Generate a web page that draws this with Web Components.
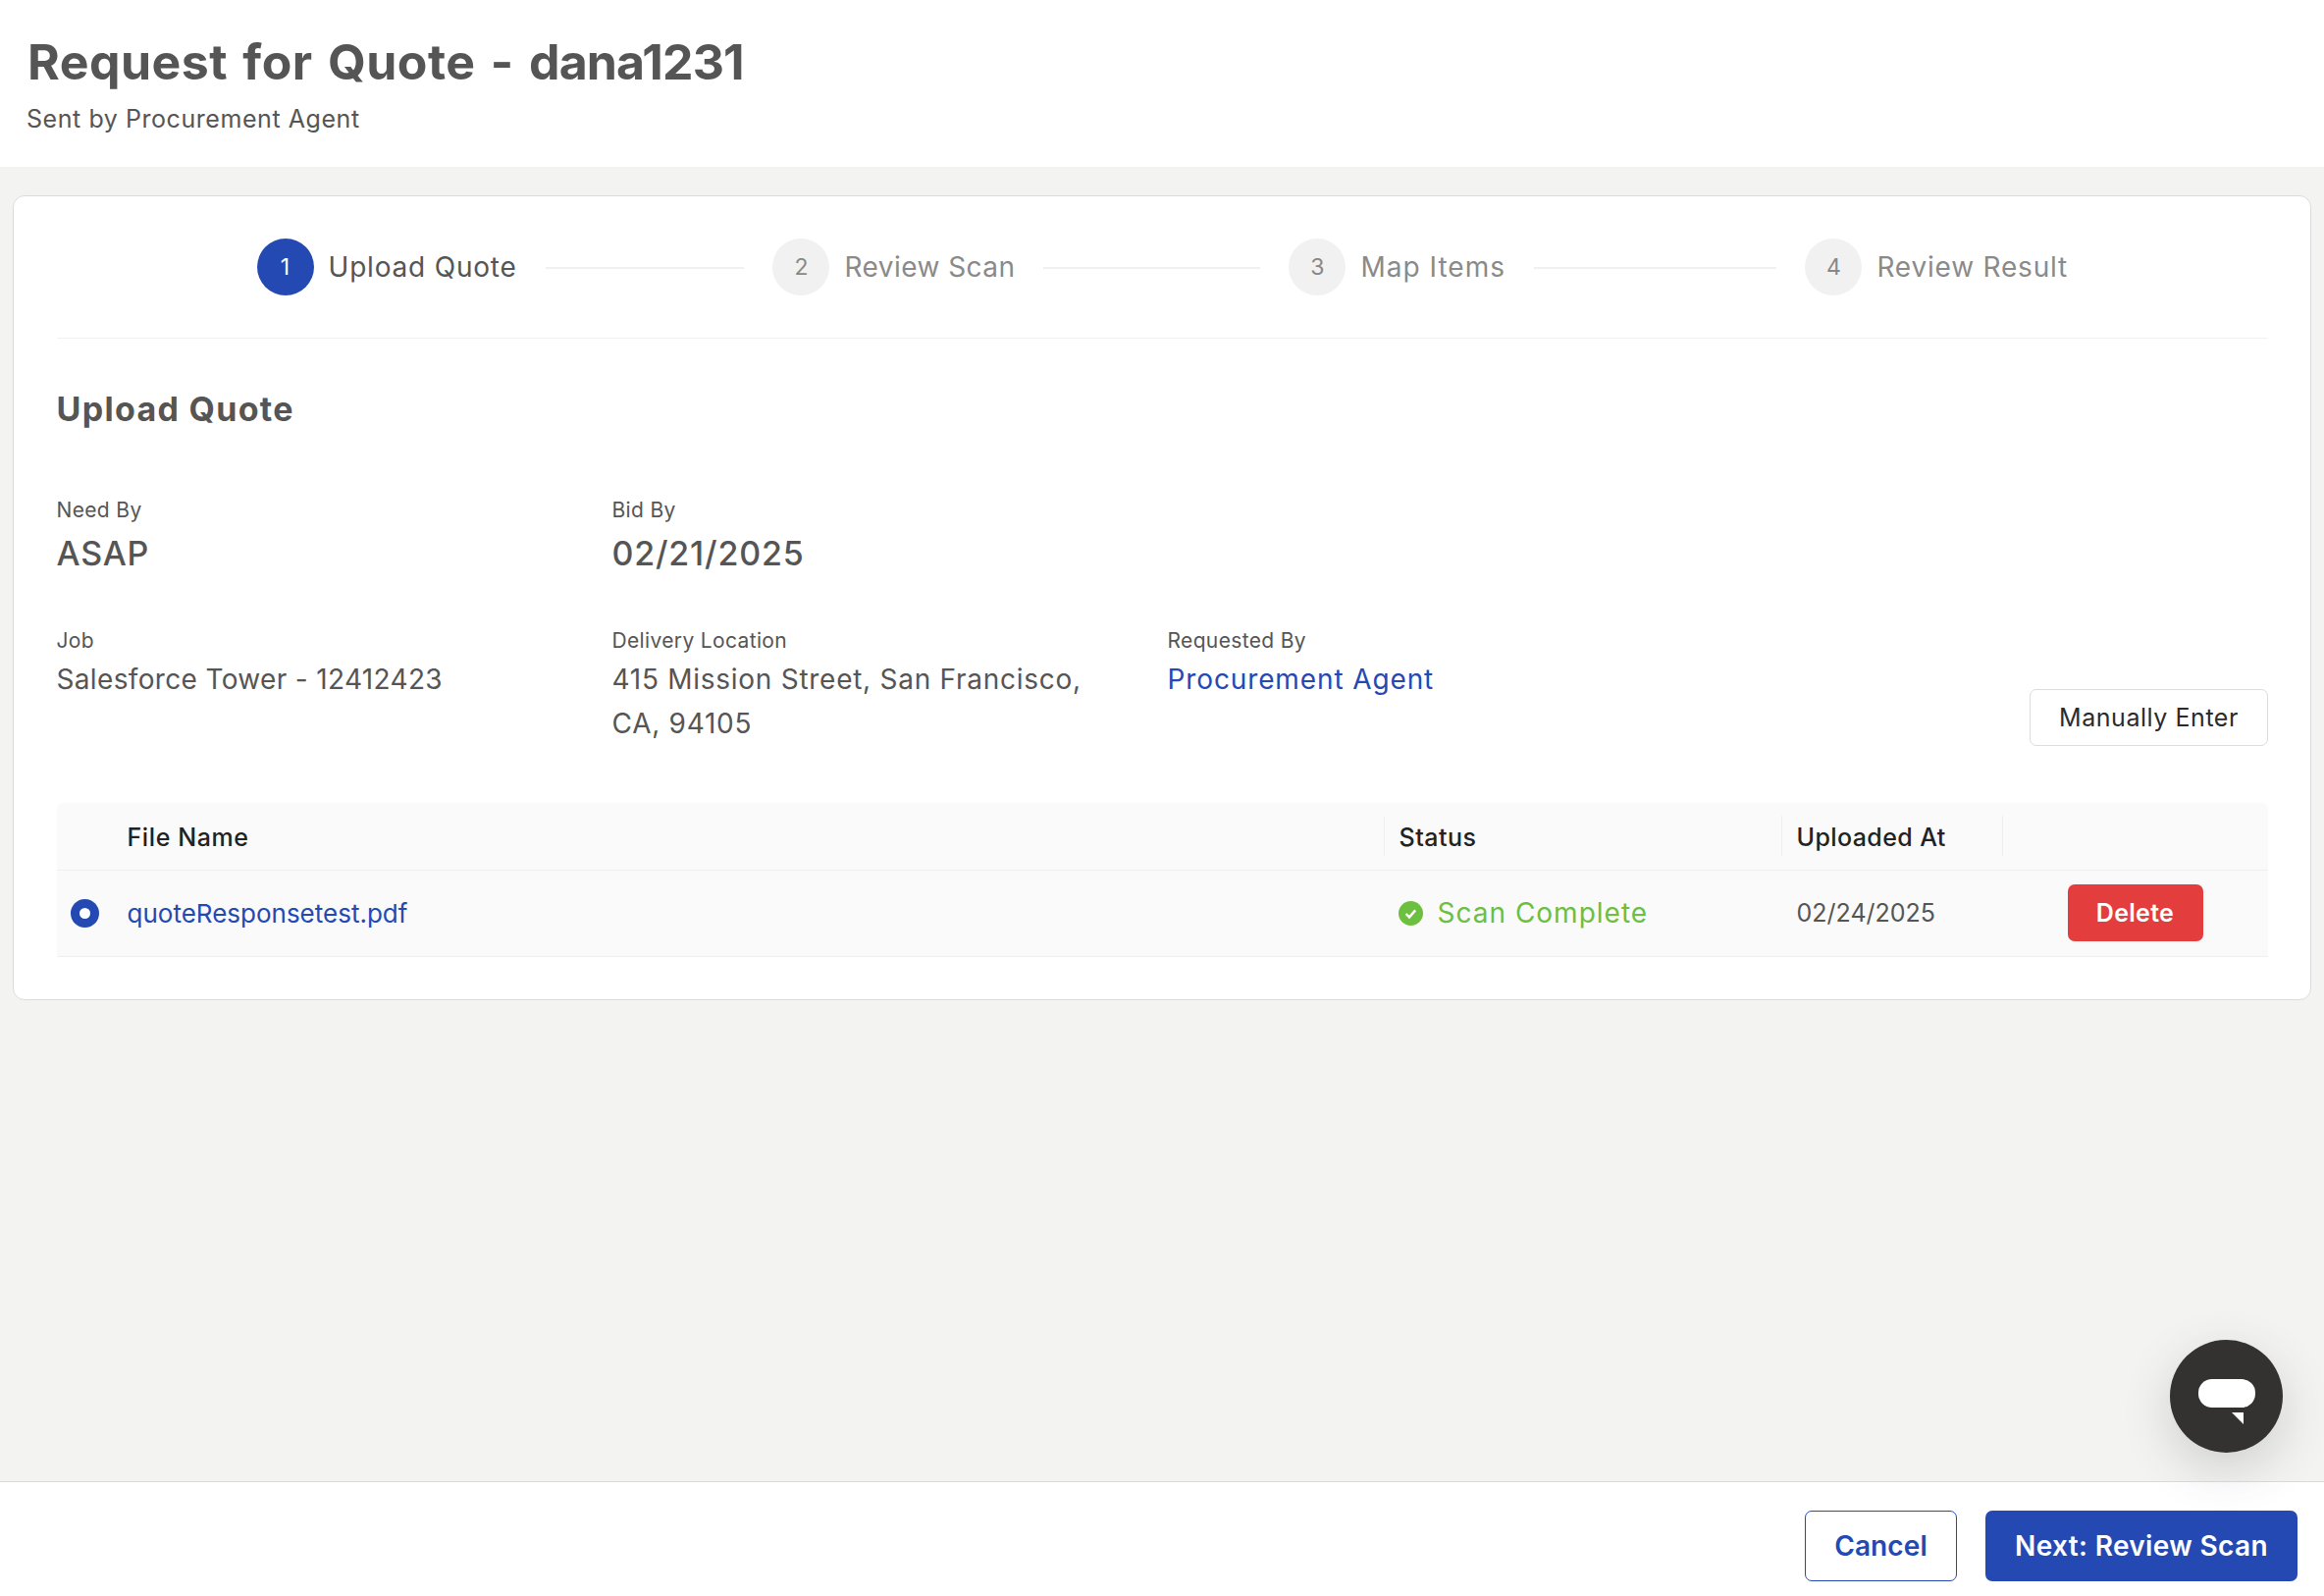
<!DOCTYPE html>
<html>
<head>
<meta charset="utf-8">
<title>Request for Quote</title>
<style>
  html, body { margin: 0; height: 100%; }
  body { font-family: Inter, "Liberation Sans", sans-serif; color: #555; background: #f3f3f2; }
</style>
</head>
<body>
<rfq-page>
  <rfq-header slot="header" title-text="Request for Quote - " name="dana1231" sub="Sent by Procurement Agent"></rfq-header>
  <rfq-card>
    <rfq-stepper>
      <rfq-step num="1" active ls="0.8">Upload Quote</rfq-step>
      <rfq-step num="2" ls="0.45">Review Scan</rfq-step>
      <rfq-step num="3" ls="1">Map Items</rfq-step>
      <rfq-step num="4" ls="0.8" last>Review Result</rfq-step>
    </rfq-stepper>
    <rfq-info>
      <rfq-field label="Need By" big ls="0.7">ASAP</rfq-field>
      <rfq-field label="Bid By" big ls="0.8">02/21/2025</rfq-field>
      <span></span><span></span>
      <rfq-field label="Job" ls="0.34">Salesforce Tower - 12412423</rfq-field>
      <rfq-field label="Delivery Location" ls="0.73">415 Mission Street, San Francisco, CA, 94105</rfq-field>
      <rfq-field label="Requested By" link ls="0.88">Procurement Agent</rfq-field>
      <rfq-button slot="action" kind="plain" ls="0.55">Manually Enter</rfq-button>
    </rfq-info>
    <rfq-table></rfq-table>
  </rfq-card>
  <rfq-footer slot="footer">
    <rfq-button kind="outline" ls="0.1">Cancel</rfq-button>
    <rfq-button kind="primary" ls="0.35">Next: Review Scan</rfq-button>
  </rfq-footer>
  <chat-bubble slot="overlay"></chat-bubble>
</rfq-page>

<script>
(function () {
  const BLUE = '#2449b2';

  function define(name, html, init) {
    customElements.define(name, class extends HTMLElement {
      constructor() {
        super();
        this.attachShadow({mode: 'open'}).innerHTML = html;
      }
      connectedCallback() {
        if (init) init.call(this, this.shadowRoot);
      }
    });
  }

  define('rfq-page', `
  <style>
  :host { display: flex; flex-direction: column; height: 100vh; position: relative; overflow: hidden; }
  main { flex: 1; padding: 29px 13px 0 13px; min-height: 0; }
  </style>
  <slot name="header"></slot>
  <main><slot></slot></main>
  <slot name="footer"></slot>
  <slot name="overlay"></slot>`);

  define('rfq-header', `
  <style>
  :host { display: block; height: 170px; box-sizing: border-box; background: #fff; padding: 32px 28px 0; }
  h1 { margin: 0; font-size: 50px; line-height: 62px; font-weight: 700; letter-spacing: 0.47px; word-spacing: 3px; color: #555; }
  h1 span { letter-spacing: -0.85px; }
  p { margin: 11px 0 0 -1px; font-size: 25px; line-height: 32px; letter-spacing: 0.56px; color: #555; }
  </style>
  <h1><b style="font-weight:inherit"></b><span></span></h1><p></p>`, function (root) {
    root.querySelector('b').textContent = this.getAttribute('title-text');
    root.querySelector('span').textContent = this.getAttribute('name');
    root.querySelector('p').textContent = this.getAttribute('sub');
  });

  define('rfq-card', `
  <style>
  :host { display: block; background: #fff; border: 1.5px solid #dcdcdc; border-radius: 12px; padding: 42.5px 43px 43.5px 43.5px; box-sizing: border-box; }
  </style>
  <slot></slot>`);

  define('rfq-stepper', `
  <style>
  :host { display: block; border-bottom: 1.5px solid #f1f1f1; padding: 0 204px 43px; }
  .row { display: flex; align-items: center; }
  </style>
  <div class="row"><slot></slot></div>`);

  define('rfq-step', `
  <style>
  :host { display: flex; align-items: center; flex: 1 1 0; min-width: 0; }
  :host([last]) { flex: none; }
  .dot { width: 58px; height: 58px; border-radius: 50%; background: #f1f1f1; color: #888; font-size: 23px; display: flex; align-items: center; justify-content: center; flex: none; }
  :host([active]) .dot { background: ${BLUE}; color: #fff; }
  .text { margin-left: 15px; font-size: 28px; line-height: 40px; color: #8a8a8a; white-space: nowrap; }
  :host([active]) .text { color: #555; }
  .line { flex: 1; height: 2px; background: #f0f0f0; margin: 2px 29px 0; }
  :host([last]) .line { display: none; }
  </style>
  <div class="dot"></div>
  <div class="text"><slot></slot></div>
  <div class="line"></div>`, function (root) {
    root.querySelector('.dot').textContent = this.getAttribute('num');
    root.querySelector('.text').style.letterSpacing = this.getAttribute('ls') + 'px';
  });

  define('rfq-info', `
  <style>
  :host { display: block; }
  h2 { margin: 47px 0 0; font-size: 34px; line-height: 50px; font-weight: 700; letter-spacing: 1.3px; color: #555; }
  .grid { display: grid; grid-template-columns: 566px 566px 566px 1fr; row-gap: 52px; margin-top: 63px; }
  .action { grid-column: 4; grid-row: 2; justify-self: end; align-self: end; }
  .fields { display: contents; }
  </style>
  <h2>Upload Quote</h2>
  <div class="grid">
    <div class="fields"><slot></slot></div>
    <div class="action"><slot name="action"></slot></div>
  </div>`);

  define('rfq-field', `
  <style>
  :host { display: block; min-width: 0; }
  .label { font-size: 21px; line-height: 30px; letter-spacing: 0.35px; color: #555; margin-bottom: 6px; }
  .value { font-size: 28px; line-height: 45px; color: #555; max-width: 500px; margin-top: -4px; }
  :host([big]) .value { font-size: 34px; font-weight: 500; margin-top: 0; }
  :host([link]) .value { color: ${BLUE}; }
  </style>
  <div class="label"></div>
  <div class="value"><slot></slot></div>`, function (root) {
    root.querySelector('.label').textContent = this.getAttribute('label');
    root.querySelector('.value').style.letterSpacing = this.getAttribute('ls') + 'px';
  });

  define('rfq-button', `
  <style>
  :host { display: inline-block; }
  .btn { box-sizing: border-box; display: flex; align-items: center; justify-content: center; border-radius: 7px; white-space: nowrap; }
  :host([kind="plain"]) .btn { height: 58px; width: 243px; background: #fff; border: 1.5px solid #dcdcdc; font-size: 25px; color: #2b2b2b; }
  :host([kind="danger"]) .btn { height: 58px; width: 138px; background: #e33d3d; color: #fff; font-size: 25px; font-weight: 600; }
  :host([kind="outline"]) .btn { height: 72px; width: 155px; background: #fff; border: 1.5px solid ${BLUE}; color: ${BLUE}; font-size: 28px; font-weight: 600; }
  :host([kind="primary"]) .btn { height: 72px; width: 318px; background: ${BLUE}; color: #fff; font-size: 28px; font-weight: 600; }
  </style>
  <div class="btn"><slot></slot></div>`, function (root) {
    root.querySelector('.btn').style.letterSpacing = this.getAttribute('ls') + 'px';
  });

  define('rfq-table', `
  <style>
  :host { display: block; margin-top: 58px; }
  .row { display: grid; grid-template-columns: 72px 1280px 405px 225px 1fr; background: #fafafa; align-items: center; border-bottom: 1.5px solid #efefef; box-sizing: border-box; }
  .head { height: 69px; border-radius: 6px 6px 0 0; font-size: 25px; font-weight: 500; color: #222; }
  .body { height: 88px; font-size: 25px; color: #555; }
  .head .cell { border-left: 1.5px solid #efefef; height: 41px; line-height: 44px; padding-left: 15px; }
  .head .cell.first { border-left: 0; padding-left: 0; }
  .radio { width: 29px; height: 29px; border-radius: 50%; background: ${BLUE}; margin-left: 14px; display: flex; align-items: center; justify-content: center; }
  .radio::after { content: ""; width: 11px; height: 11px; border-radius: 50%; background: #fff; }
  .file { color: ${BLUE}; font-size: 26px; }
  .status { display: flex; align-items: center; gap: 15px; padding-left: 15px; color: #6cbf3f; font-size: 28px; letter-spacing: 1px; }
  .date { padding-left: 16px; }
  .act { padding-left: 67px; display: flex; }
  svg { display: block; flex: none; }
  </style>
  <div class="row head">
    <span></span>
    <div class="cell first" style="letter-spacing:.6px">File Name</div>
    <div class="cell" style="letter-spacing:.5px">Status</div>
    <div class="cell" style="letter-spacing:.4px">Uploaded At</div>
    <div class="cell"></div>
  </div>
  <div class="row body">
    <div class="radio"></div>
    <div class="file">quoteResponsetest.pdf</div>
    <div class="status">
      <svg width="25" height="25" viewBox="0 0 25 25"><circle cx="12.5" cy="12.5" r="12.5" fill="#6cbf3f"/><path d="M7.6 13l3.4 3.4 6.2-7" fill="none" stroke="#fff" stroke-width="2.4"/></svg>
      <span>Scan Complete</span>
    </div>
    <div class="date">02/24/2025</div>
    <div class="act"><rfq-button kind="danger" ls="0.3">Delete</rfq-button></div>
  </div>`);

  define('rfq-footer', `
  <style>
  :host { display: flex; justify-content: flex-end; gap: 29px; height: 117px; box-sizing: border-box; background: #fff; border-top: 1.5px solid #dcdcdc; padding: 29px 27px 0 0; }
  </style>
  <slot></slot>`);

  define('chat-bubble', `
  <style>
  :host { position: absolute; right: 42px; bottom: 146px; width: 115px; height: 115px; border-radius: 50%; background: #333230; box-shadow: 0 16px 50px rgba(60, 70, 65, .2); display: block; }
  svg { display: block; }
  </style>
  <svg width="115" height="115" viewBox="0 0 115 115">
    <rect x="29" y="40" width="58" height="29" rx="14" fill="#fff"/>
    <path d="M63 74h12v12z" fill="#fff"/>
  </svg>`);
})();
</script>
</body>
</html>
